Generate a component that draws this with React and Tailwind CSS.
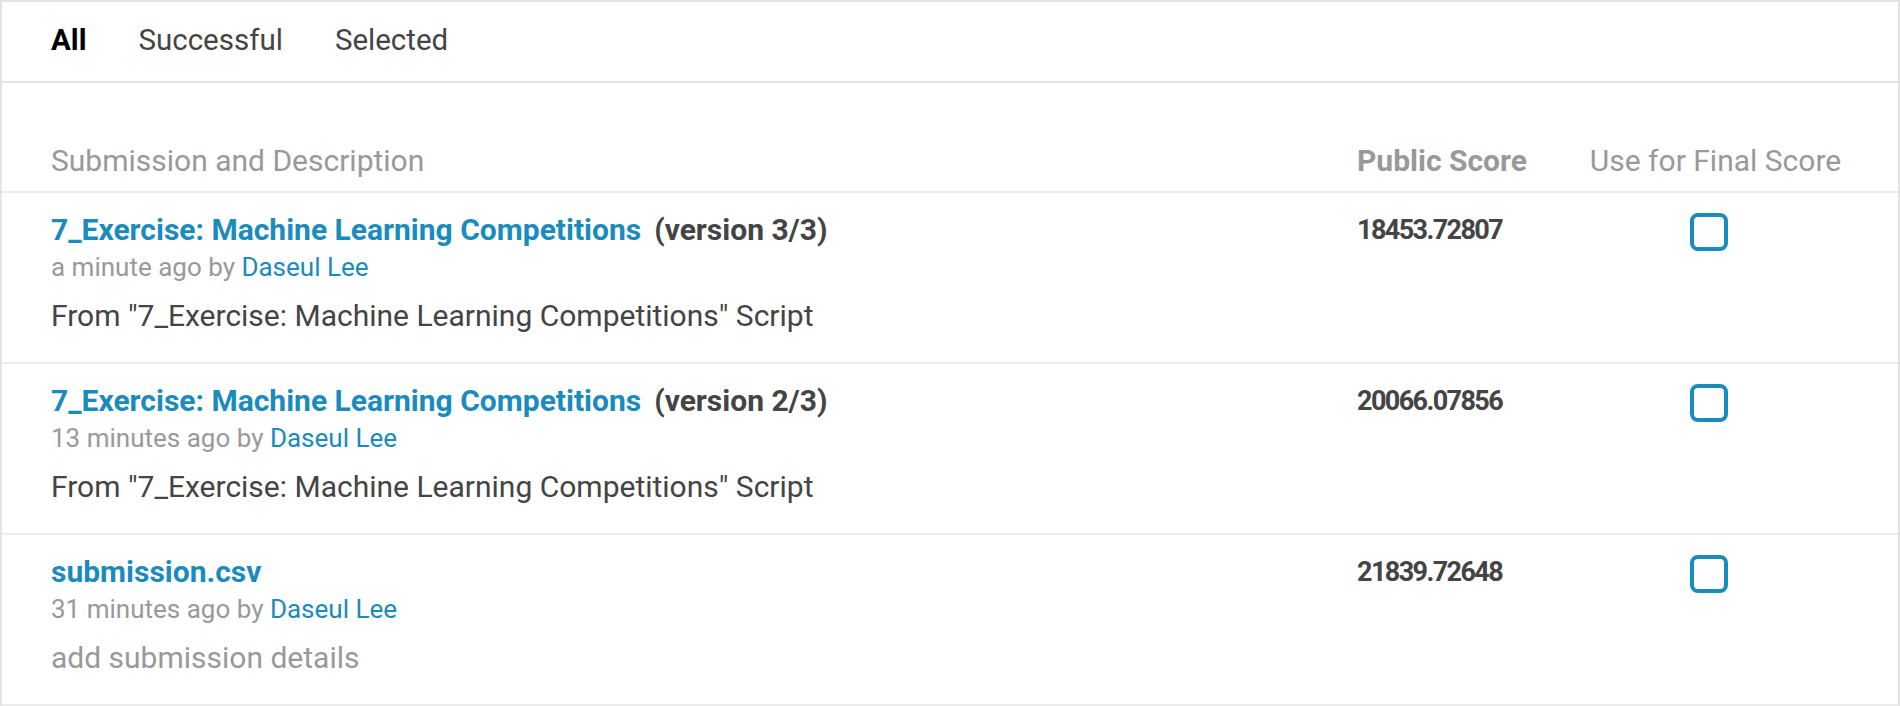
import React from "react";

const rows = [
  {
    title: "7_Exercise: Machine Learning Competitions",
    version: "(version 3/3)",
    when: "a minute ago",
    desc: 'From "7_Exercise: Machine Learning Competitions" Script',
    muted: false,
    score: "18453.72807",
  },
  {
    title: "7_Exercise: Machine Learning Competitions",
    version: "(version 2/3)",
    when: "13 minutes ago",
    desc: 'From "7_Exercise: Machine Learning Competitions" Script',
    muted: false,
    score: "20066.07856",
  },
  {
    title: "submission.csv",
    version: null,
    when: "31 minutes ago",
    desc: "add submission details",
    muted: true,
    score: "21839.72648",
  },
];

const App = () => {
  return (
    <div className="min-h-screen bg-white font-['Roboto',sans-serif]">
      <div className="border-2 border-b-0 border-[#e3e3e3]">
        {/* Tabs */}
        <div className="flex items-center gap-[52px] h-[81px] pl-[49px] pb-[2px] text-[29.5px] text-[#444] border-b-2 border-[#e3e3e3]">
          <span className="font-bold text-black">All</span>
          <span>Successful</span>
          <span>Selected</span>
        </div>

        {/* Header */}
        <div className="grid grid-cols-[1fr_233px_251px] pl-[49px] pr-[57px] pt-[62px] pb-[14px] border-b-2 border-[#ececec] text-[30px] leading-[32px] text-[#999] whitespace-nowrap">
          <div>Submission and Description</div>
          <div className="font-bold">Public Score</div>
          <div className="flex justify-center">Use for Final Score</div>
        </div>

        {/* Rows */}
        {rows.map((r, i) => (
          <div
            key={i}
            className="grid grid-cols-[1fr_233px_251px] pl-[49px] pr-[57px] pt-[21px] pb-[29px] border-b-2 border-[#ececec]"
          >
            <div>
              <div className="text-[30px] leading-[32px] font-bold">
                <span className="text-[#1a8bbd]">{r.title}</span>
                {r.version && <span className="text-[#444] ml-[13px]">{r.version}</span>}
              </div>
              <div className="mt-[5px] text-[26px] leading-[32px] text-[#999]">
                {r.when} by <span className="text-[#1a8bbd]">Daseul Lee</span>
              </div>
              <div
                className={
                  "mt-[16px] text-[30px] leading-[34px] " +
                  (r.muted ? "text-[#999]" : "text-[#444]")
                }
              >
                {r.desc}
              </div>
            </div>
            <div className="text-[27px] leading-[32px] font-bold text-[#444] tracking-[-1.6px]">{r.score}</div>
            <div className="flex justify-center pr-[14px]">
              <div className="-mt-[1px] w-[38px] h-[38px] border-4 border-[#1a8bbd] rounded-[8px] bg-white" />
            </div>
          </div>
        ))}
      </div>
    </div>
  );
};

export default App;
